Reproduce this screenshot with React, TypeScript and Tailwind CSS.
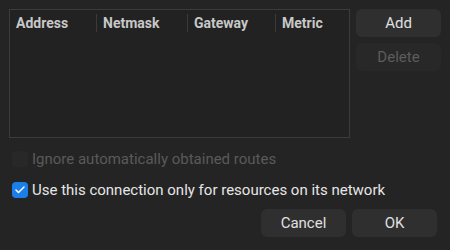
import { Check } from "lucide-react";

const columns = [
  { label: "Address", width: "w-[86px]" },
  { label: "Netmask", width: "w-[91px]" },
  { label: "Gateway", width: "w-[88px]" },
  { label: "Metric", width: "flex-1" },
];

const App = () => {
  return (
    <div
      className="w-[450px] h-[250px] bg-[#242424] text-[15px] text-[#e0e0e0] px-[9px] pt-[9px]"
      style={{ fontFamily: "Roboto, 'Noto Sans', sans-serif" }}
    >
      <div className="flex gap-[6px]">
        <div className="w-[341px] h-[129px] border border-[#3c3c3c] bg-[#222222]">
          <div className="flex h-[26px] items-center">
            {columns.map((col, i) => (
              <div
                key={col.label}
                className={`${col.width} h-[18px] flex items-center px-[6px] text-[14px] font-bold text-[#c8c8c8] ${
                  i > 0 ? "border-l border-[#3a3a3a]" : ""
                }`}
              >
                {col.label}
              </div>
            ))}
          </div>
        </div>
        <div className="flex flex-col gap-[6px]">
          <button className="w-[85px] h-[28px] rounded-[6px] bg-[#2f2f2f] text-[#e0e0e0]">
            Add
          </button>
          <button className="w-[85px] h-[28px] rounded-[6px] bg-[#282828] text-[#5c5c5c]">
            Delete
          </button>
        </div>
      </div>

      <div className="flex items-center gap-[4px] mt-[13px] pl-[3px] h-[16px]">
        <span className="w-[16px] h-[16px] rounded-[4px] bg-[#282828]" />
        <span className="text-[#5a5a5a]">Ignore automatically obtained routes</span>
      </div>

      <div className="flex items-center gap-[4px] mt-[15px] pl-[3px] h-[16px]">
        <span className="w-[16px] h-[16px] rounded-[4px] bg-[#1a7fe8] flex items-center justify-center">
          <Check className="w-[12px] h-[12px] text-white" strokeWidth={3} />
        </span>
        <span className="text-[#e6e6e6]">Use this connection only for resources on its network</span>
      </div>

      <div className="flex justify-end gap-[6px] mt-[11px] pr-[4px]">
        <button className="w-[85px] h-[28px] rounded-[6px] bg-[#2f2f2f] text-[#e0e0e0]">
          Cancel
        </button>
        <button className="w-[85px] h-[28px] rounded-[6px] bg-[#2f2f2f] text-[#e0e0e0]">
          OK
        </button>
      </div>
    </div>
  );
};

export default App;
